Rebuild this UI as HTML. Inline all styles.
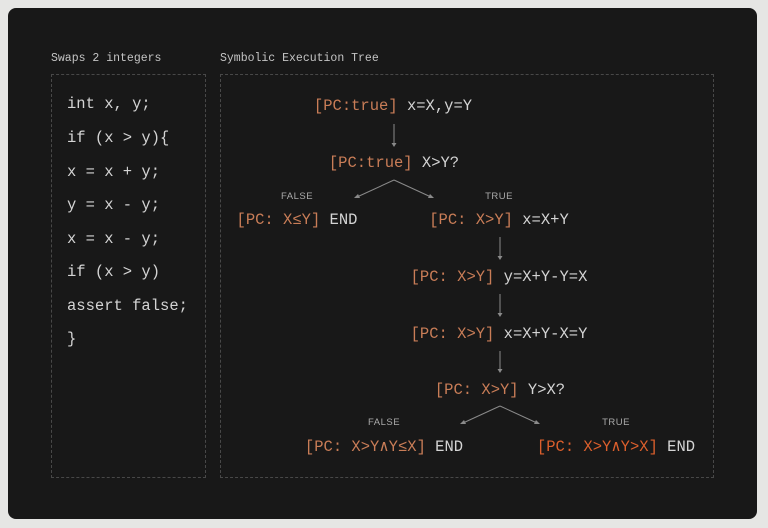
<!DOCTYPE html>
<html><head><meta charset="utf-8"><style>
html,body{margin:0;padding:0;}
body{width:768px;height:528px;background:#e6e6e4;position:relative;overflow:hidden;font-family:"Liberation Mono",monospace;}
.panel{position:absolute;left:8px;top:8px;width:749px;height:511px;background:#181818;border-radius:8px;}
.lbl{position:absolute;top:52px;font-size:11.5px;color:#c4c4c4;}
.box{position:absolute;border:1px dashed #484848;}
.code{position:absolute;left:67px;font-size:15.5px;color:#d4d4d4;line-height:20px;white-space:pre;}
.n{position:absolute;transform:translateX(-50%);font-size:15.5px;line-height:20px;white-space:pre;color:#d4d4d4;font-family:"Liberation Mono","DejaVu Sans Mono",monospace;}
.o{color:#c97d57;}
.r{color:#dc5f2c;}
.s{position:absolute;transform:translateX(-50%);font-size:9.5px;line-height:12px;color:#aaa;font-family:"Liberation Sans",sans-serif;letter-spacing:0.5px;}
</style></head><body>
<div class="panel"></div>
<div class="lbl" style="left:51px">Swaps 2 integers</div>
<div class="lbl" style="left:220px">Symbolic Execution Tree</div>
<div class="box" style="left:51px;top:74px;width:153px;height:402px"></div>
<div class="box" style="left:220px;top:74px;width:492px;height:402px"></div>
<div class="code" style="top:94px">int x, y;</div>
<div class="code" style="top:128px">if (x &gt; y){</div>
<div class="code" style="top:162px">x = x + y;</div>
<div class="code" style="top:195px">y = x - y;</div>
<div class="code" style="top:229px">x = x - y;</div>
<div class="code" style="top:262px">if (x &gt; y)</div>
<div class="code" style="top:296px">assert false;</div>
<div class="code" style="top:329px">}</div>

<svg style="position:absolute;left:0;top:0" width="768" height="528">
<g stroke="#8a8a8a" stroke-width="1" fill="none">
<line x1="394" y1="124" x2="394" y2="144"/>
<line x1="394" y1="180" x2="357" y2="197"/>
<line x1="394" y1="180" x2="431" y2="197"/>
<line x1="500" y1="237" x2="500" y2="257"/>
<line x1="500" y1="294" x2="500" y2="314"/>
<line x1="500" y1="351" x2="500" y2="370"/>
<line x1="500" y1="406" x2="463" y2="423"/>
<line x1="500" y1="406" x2="537" y2="423"/>
</g>
<g fill="#8a8a8a">
<path d="M391.5 143 L396.5 143 L394 147 Z"/>
<path d="M497.5 256 L502.5 256 L500 260 Z"/>
<path d="M497.5 313 L502.5 313 L500 317 Z"/>
<path d="M497.5 369 L502.5 369 L500 373 Z"/>
<path d="M354 198 L358 194 L360 198 Z"/>
<path d="M434 198 L428 198 L430 194 Z"/>
<path d="M460 424 L464 420 L466 424 Z"/>
<path d="M540 424 L534 424 L536 420 Z"/>
</g>
</svg>

<div class="n" style="left:393px;top:96px"><span class="o">[PC:true]</span> x=X,y=Y</div>
<div class="n" style="left:394px;top:153px"><span class="o">[PC:true]</span> X&gt;Y?</div>
<div class="s" style="left:297px;top:191px">FALSE</div>
<div class="s" style="left:499px;top:191px">TRUE</div>
<div class="n" style="left:297px;top:210px"><span class="o">[PC: X≤Y]</span> END</div>
<div class="n" style="left:499px;top:210px"><span class="o">[PC: X&gt;Y]</span> x=X+Y</div>
<div class="n" style="left:499px;top:267px"><span class="o">[PC: X&gt;Y]</span> y=X+Y-Y=X</div>
<div class="n" style="left:499px;top:324px"><span class="o">[PC: X&gt;Y]</span> x=X+Y-X=Y</div>
<div class="n" style="left:500px;top:380px"><span class="o">[PC: X&gt;Y]</span> Y&gt;X?</div>
<div class="s" style="left:384px;top:417px">FALSE</div>
<div class="s" style="left:616px;top:417px">TRUE</div>
<div class="n" style="left:384px;top:437px"><span class="o">[PC: X&gt;Y∧Y≤X]</span> END</div>
<div class="n" style="left:616px;top:437px"><span class="r">[PC: X&gt;Y∧Y&gt;X]</span> END</div>
</body></html>
